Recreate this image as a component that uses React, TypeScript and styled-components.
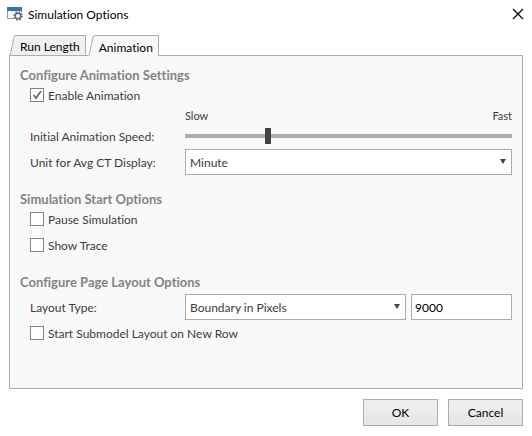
import React, { useState } from "react";
import styled, { createGlobalStyle } from "styled-components";

const GlobalStyle = createGlobalStyle`
  *, *::before, *::after { box-sizing: border-box; }
  body { margin: 0; background: #fff; }
  body, button, input, select {
    font-family: Lato, "Open Sans", sans-serif;
    font-size: 12px;
    line-height: 16px;
    font-variant-ligatures: none;
    color: #3c3c3c;
  }
`;

const Dialog = styled.main`
  display: flex;
  flex-direction: column;
  min-height: 100vh;
  padding: 0 9px 10px;
`;

const TitleBar = styled.header`
  display: flex;
  align-items: center;
  height: 28px;
  margin: 0 -1px 0 -2px;
`;

const Title = styled.h1`
  flex: 1;
  margin: 0 0 0 5px;
  padding-top: 2px;
  font-size: 12px;
  font-weight: 400;
  color: #000;
`;

const CloseButton = styled.button`
  display: flex;
  padding: 0;
  border: 0;
  background: none;
`;

const TabList = styled.div`
  display: flex;
  gap: 3px;
  height: 21px;
  margin: 7px 0 -1px 1px;
  position: relative;
`;

const Tab = styled.button<{ $active: boolean }>`
  display: flex;
  align-items: stretch;
  height: ${(p) => (p.$active ? 21 : 20)}px;
  padding: 0;
  border: 0;
  background: none;
  color: #000;
  --fill: ${(p) => (p.$active ? "#f9f9f9" : "#f0f0f0")};
`;

const TabFace = styled.span`
  display: flex;
  align-items: center;
  padding: 3px 5px 0 4px;
  border: solid #acacac;
  border-width: 1px 1px 0 0;
  background: var(--fill);
`;

const Panel = styled.section`
  flex: 1;
  display: flex;
  flex-direction: column;
  gap: 17px;
  padding: 12px 10px;
  border: 1px solid #acacac;
  background: #f9f9f9;
`;

const Group = styled.section`
  display: flex;
  flex-direction: column;
`;

const Heading = styled.h2<{ $gap?: number }>`
  margin: 0 0 ${(p) => p.$gap ?? 0}px;
  font-size: 13px;
  line-height: 14px;
  font-weight: 700;
  color: #838383;
`;

const CheckRow = styled.label`
  display: flex;
  align-items: center;
  gap: 4px;
  height: 26px;
  padding-left: 10px;
`;

const CheckText = styled.span`
  padding-top: 2px;
`;

const CheckBox = styled.input`
  appearance: none;
  width: 14px;
  height: 14px;
  margin: 0;
  border: 1px solid #838383;
  background: #fff;
  &:checked {
    background: #fff
      url("data:image/svg+xml,%3Csvg xmlns='http://www.w3.org/2000/svg' viewBox='0 0 12 12'%3E%3Cpath d='M2.500 6l2.500 3 5-7' fill='none' stroke='%23666' stroke-width='1.7'/%3E%3C/svg%3E");
  }
`;

const FieldRow = styled.div`
  display: grid;
  grid-template-columns: 155px minmax(0, 1fr);
  align-items: center;
  height: 26px;
  padding-left: 10px;
`;

const FieldLabel = styled.label`
  padding-top: 2px;
`;

const Fields = styled.div`
  display: grid;
  grid-template-columns: 221px minmax(0, 1fr);
  gap: 5px;
`;

const Scale = styled.div`
  display: flex;
  justify-content: space-between;
  margin-left: 165px;
  height: 15px;
  font-size: 11px;
`;

const Slider = styled.input`
  appearance: none;
  width: 100%;
  height: 16px;
  margin: 0;
  background: linear-gradient(#acacac, #acacac) center / 100% 4px no-repeat;
  &::-webkit-slider-thumb {
    appearance: none;
    width: 6px;
    height: 16px;
    background: #444;
  }
`;

const SelectBox = styled.div`
  position: relative;
`;

const Select = styled.select`
  appearance: none;
  display: block;
  width: 100%;
  height: 26px;
  padding: 2px 16px 0 4px;
  border: 1px solid #acacac;
  border-radius: 0;
  background: #fff;
`;

const Arrow = styled.svg`
  position: absolute;
  right: 6px;
  top: 10px;
  pointer-events: none;
`;

const TextInput = styled.input`
  width: 100%;
  height: 26px;
  padding: 0 3px;
  border: 1px solid #acacac;
  color: #000;
`;

const Footer = styled.footer`
  display: flex;
  justify-content: flex-end;
  gap: 10px;
  padding-top: 10px;
`;

const PushButton = styled.button`
  width: 75px;
  height: 27px;
  padding: 0;
  border: 1px solid #acacac;
  background: linear-gradient(#f0f0f0, #e5e5e5);
  color: #000;
`;

function DialogIcon() {
  return (
    <svg width="16" height="16" viewBox="0 0 16 16" aria-hidden="true">
      <path d="M.5 1.5h14v11H.5z" fill="#f4f6f8" stroke="#8d969e" />
      <path d="M0 1h15v4H0z" fill="#3174bd" />
      <circle cx="11" cy="10" r="5" fill="#fff" />
      <circle cx="11" cy="10" r="4" fill="none" stroke="#666" strokeWidth="1.6" strokeDasharray="1.6 1.5416" />
      <circle cx="11" cy="10" r="2.700" fill="#fff" stroke="#666" strokeWidth="1.4" />
    </svg>
  );
}

function TabButton({ label, active, onSelect }: { label: string; active: boolean; onSelect: () => void }) {
  return (
    <Tab role="tab" aria-selected={active} $active={active} onClick={onSelect}>
      <svg width="6" height={active ? 21 : 20} aria-hidden="true">
        <path d="M0 21V20L4 2Q4.500 .5 6 .5V21z" fill="var(--fill)" />
        <path d="M0 20.500L4 2Q4.500 .5 6 .5" fill="none" stroke="#acacac" />
      </svg>
      <TabFace>{label}</TabFace>
    </Tab>
  );
}

function DropDown({ id, options }: { id: string; options: string[] }) {
  return (
    <SelectBox>
      <Select id={id}>
        {options.map((o) => (
          <option key={o}>{o}</option>
        ))}
      </Select>
      <Arrow width="6" height="5" aria-hidden="true">
        <path d="M0 0h6L3 5z" fill="#444" />
      </Arrow>
    </SelectBox>
  );
}

function Check({ label, checked = false }: { label: string; checked?: boolean }) {
  return (
    <CheckRow>
      <CheckBox type="checkbox" defaultChecked={checked} />
      <CheckText>{label}</CheckText>
    </CheckRow>
  );
}

export default function App() {
  const [tab, setTab] = useState("Animation");
  return (
    <>
      <GlobalStyle />
      <Dialog>
        <TitleBar>
          <DialogIcon />
          <Title>Simulation Options</Title>
          <CloseButton aria-label="Close">
            <svg width="12" height="12" aria-hidden="true">
              <path d="M1 1l10 10M11 1L1 11" stroke="#000" strokeWidth="1.2" />
            </svg>
          </CloseButton>
        </TitleBar>
        <TabList role="tablist">
          {["Run Length", "Animation"].map((name) => (
            <TabButton key={name} label={name} active={tab === name} onSelect={() => setTab(name)} />
          ))}
        </TabList>
        <Panel role="tabpanel" aria-label={tab}>
          <Group>
            <Heading>Configure Animation Settings</Heading>
            <Check label="Enable Animation" checked />
            <Scale>
              <span>Slow</span>
              <span>Fast</span>
            </Scale>
            <FieldRow>
              <FieldLabel htmlFor="speed">Initial Animation Speed:</FieldLabel>
              <Slider id="speed" type="range" min={0} max={100} defaultValue={25} />
            </FieldRow>
            <FieldRow>
              <FieldLabel htmlFor="unit">Unit for Avg CT Display:</FieldLabel>
              <DropDown id="unit" options={["Minute"]} />
            </FieldRow>
          </Group>
          <Group>
            <Heading>Simulation Start Options</Heading>
            <Check label="Pause Simulation" />
            <Check label="Show Trace" />
          </Group>
          <Group>
            <Heading $gap={5}>Configure Page Layout Options</Heading>
            <FieldRow>
              <FieldLabel htmlFor="layout">Layout Type:</FieldLabel>
              <Fields>
                <DropDown id="layout" options={["Boundary in Pixels"]} />
                <TextInput aria-label="Boundary in Pixels" defaultValue="9000" />
              </Fields>
            </FieldRow>
            <Check label="Start Submodel Layout on New Row" />
          </Group>
        </Panel>
        <Footer>
          <PushButton>OK</PushButton>
          <PushButton>Cancel</PushButton>
        </Footer>
      </Dialog>
    </>
  );
}
